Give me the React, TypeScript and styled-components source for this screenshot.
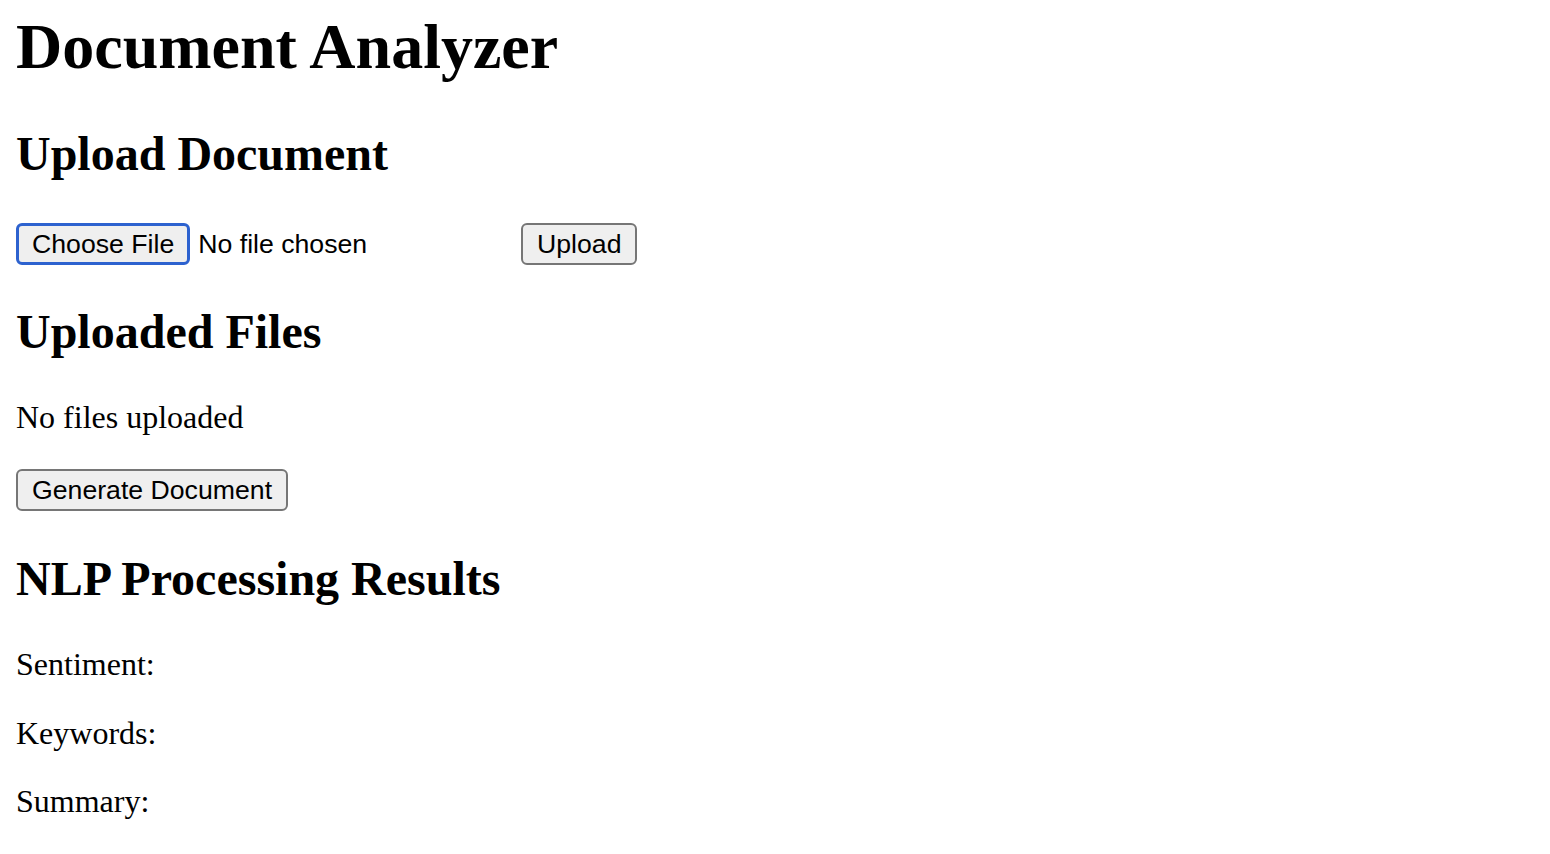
import React from "react";
import styled, { createGlobalStyle, css } from "styled-components";

const GlobalStyle = createGlobalStyle`
  html, body {
    margin: 0;
    padding: 0;
    background: #ffffff;
    color: #000000;
    font-family: "Liberation Serif", "Times New Roman", serif;
  }
`;

const Page = styled.main`
  padding: 10px 16px 0;
`;

const Title = styled.h1`
  margin: 0 0 42px;
  font-size: 64px;
  line-height: 74px;
  font-weight: 700;
`;

const SectionHeading = styled.h2<{ $gap: number }>`
  margin: ${(p) => p.$gap}px 0 0;
  font-size: 48px;
  line-height: 55px;
  font-weight: 700;
`;

const UploadRow = styled.div`
  display: flex;
  align-items: center;
  margin-top: 42px;
  height: 42px;
`;

const FilePicker = styled.label`
  display: flex;
  align-items: center;
  width: 497px;
  margin-right: 8px;
  cursor: pointer;
`;

const HiddenInput = styled.input`
  display: none;
`;

const buttonBase = css`
  box-sizing: border-box;
  height: 42px;
  display: inline-flex;
  align-items: center;
  font-family: "Liberation Sans", Arial, sans-serif;
  font-size: 26.67px;
  line-height: 30px;
  color: #000000;
  background: #efefef;
  border-radius: 6px;
  white-space: nowrap;
`;

const FakeButton = styled.span`
  ${buttonBase};
  padding: 4px 13px;
  border: 3px solid #2d62cf;
`;

const FileStatus = styled.span`
  margin-left: 8px;
  font-family: "Liberation Sans", Arial, sans-serif;
  font-size: 26.67px;
  line-height: 30px;
`;

const Button = styled.button<{ $top?: number }>`
  ${buttonBase};
  margin: ${(p) => p.$top ?? 0}px 0 0;
  padding: 4px 14px;
  border: 2px solid #767676;
  cursor: pointer;
`;

const Text = styled.p<{ $gap: number }>`
  margin: ${(p) => p.$gap}px 0 0;
  font-size: 32px;
  line-height: 36.8px;
`;

export default function App() {
  const results = ["Sentiment:", "Keywords:", "Summary:"];
  return (
    <>
      <GlobalStyle />
      <Page>
        <Title>Document Analyzer</Title>
        <SectionHeading $gap={0}>Upload Document</SectionHeading>
        <UploadRow>
          <FilePicker>
            <HiddenInput type="file" />
            <FakeButton>Choose File</FakeButton>
            <FileStatus>No file chosen</FileStatus>
          </FilePicker>
          <Button type="button">Upload</Button>
        </UploadRow>
        <SectionHeading $gap={39}>Uploaded Files</SectionHeading>
        <Text $gap={40}>No files uploaded</Text>
        <Button type="button" $top={33}>
          Generate Document
        </Button>
        <SectionHeading $gap={40}>NLP Processing Results</SectionHeading>
        {results.map((r, i) => (
          <Text key={r} $gap={i === 0 ? 40 : 32}>
            {r}
          </Text>
        ))}
      </Page>
    </>
  );
}
